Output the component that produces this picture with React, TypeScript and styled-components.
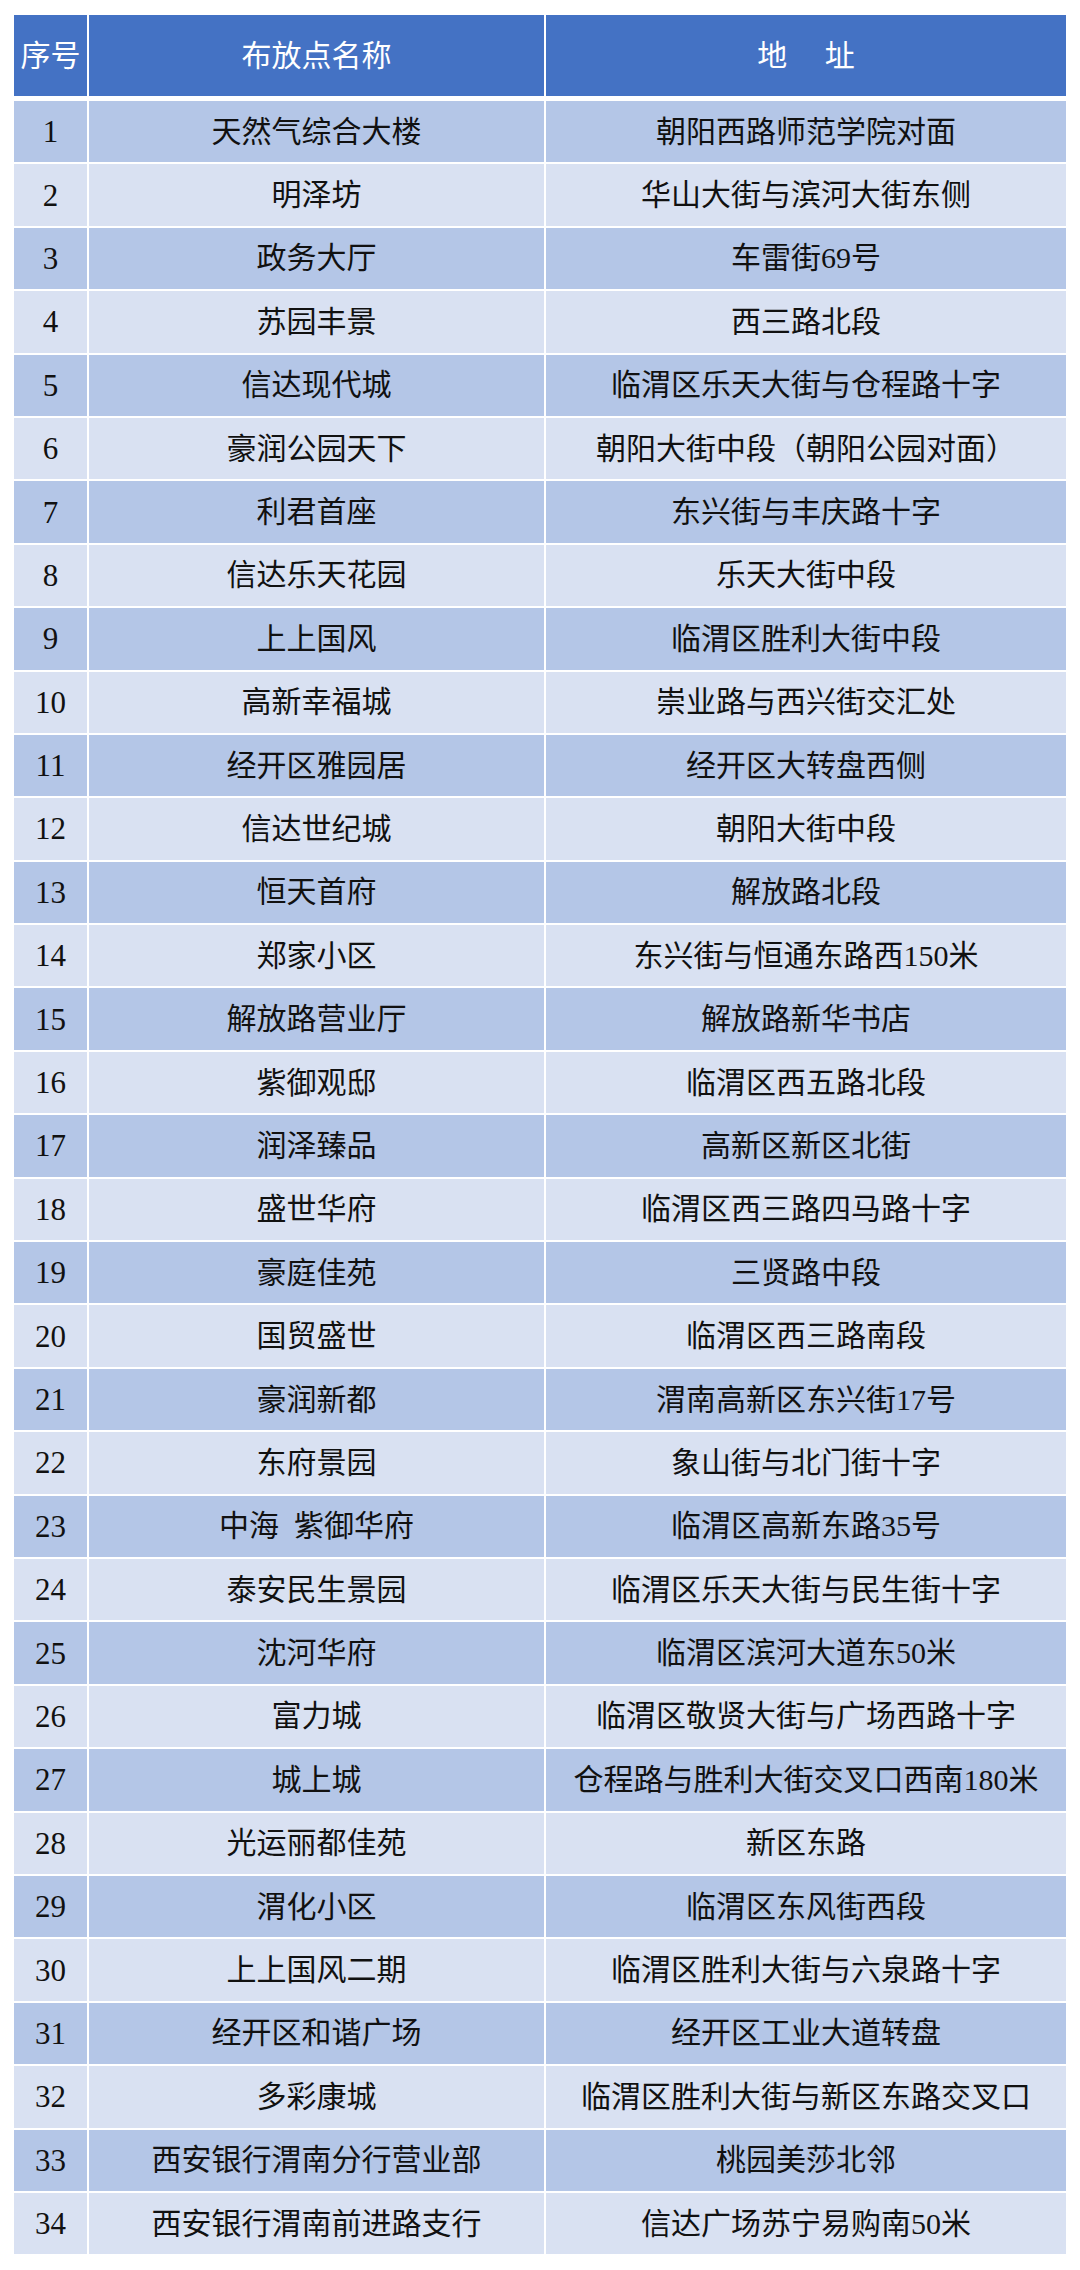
import styled, { createGlobalStyle } from "styled-components";

const GlobalStyle = createGlobalStyle`
  html, body {
    margin: 0;
    padding: 0;
    background: #ffffff;
  }
  body {
    font-family: "Liberation Serif", "Noto Sans CJK SC", serif;
  }
`;

const sites: [string, string][] = [
  ["天然气综合大楼", "朝阳西路师范学院对面"],
  ["明泽坊", "华山大街与滨河大街东侧"],
  ["政务大厅", "车雷街69号"],
  ["苏园丰景", "西三路北段"],
  ["信达现代城", "临渭区乐天大街与仓程路十字"],
  ["豪润公园天下", "朝阳大街中段（朝阳公园对面）"],
  ["利君首座", "东兴街与丰庆路十字"],
  ["信达乐天花园", "乐天大街中段"],
  ["上上国风", "临渭区胜利大街中段"],
  ["高新幸福城", "崇业路与西兴街交汇处"],
  ["经开区雅园居", "经开区大转盘西侧"],
  ["信达世纪城", "朝阳大街中段"],
  ["恒天首府", "解放路北段"],
  ["郑家小区", "东兴街与恒通东路西150米"],
  ["解放路营业厅", "解放路新华书店"],
  ["紫御观邸", "临渭区西五路北段"],
  ["润泽臻品", "高新区新区北街"],
  ["盛世华府", "临渭区西三路四马路十字"],
  ["豪庭佳苑", "三贤路中段"],
  ["国贸盛世", "临渭区西三路南段"],
  ["豪润新都", "渭南高新区东兴街17号"],
  ["东府景园", "象山街与北门街十字"],
  ["中海\u2002紫御华府", "临渭区高新东路35号"],
  ["泰安民生景园", "临渭区乐天大街与民生街十字"],
  ["沈河华府", "临渭区滨河大道东50米"],
  ["富力城", "临渭区敬贤大街与广场西路十字"],
  ["城上城", "仓程路与胜利大街交叉口西南180米"],
  ["光运丽都佳苑", "新区东路"],
  ["渭化小区", "临渭区东风街西段"],
  ["上上国风二期", "临渭区胜利大街与六泉路十字"],
  ["经开区和谐广场", "经开区工业大道转盘"],
  ["多彩康城", "临渭区胜利大街与新区东路交叉口"],
  ["西安银行渭南分行营业部", "桃园美莎北邻"],
  ["西安银行渭南前进路支行", "信达广场苏宁易购南50米"],
];

const Page = styled.div`
  padding: 15px 14px 15px 14px;
`;

const Table = styled.div`
  width: 1052px;
  display: flex;
  flex-direction: column;
  gap: 2px;
`;

const Row = styled.div<{ $head?: boolean }>`
  display: grid;
  grid-template-columns: 73px 455px 520px;
  column-gap: 2px;
  height: ${(p) => (p.$head ? "81px" : "61.4px")};
  margin-bottom: ${(p) => (p.$head ? "3px" : "0")};
`;

const Cell = styled.div<{ $tone: "head" | "odd" | "even" }>`
  display: flex;
  align-items: center;
  justify-content: center;
  white-space: pre;
  font-size: 30px;
  line-height: 1;
  color: ${(p) => (p.$tone === "head" ? "#ffffff" : "#111111")};
  background: ${(p) =>
    p.$tone === "head" ? "#4472c4" : p.$tone === "odd" ? "#b4c6e7" : "#d9e1f2"};
`;

const NumCell = styled(Cell)`
  font-size: 31px;
`;

export default function App() {
  return (
    <>
      <GlobalStyle />
      <Page>
        <Table>
          <Row $head>
            <Cell $tone="head">序号</Cell>
            <Cell $tone="head">布放点名称</Cell>
            <Cell $tone="head">地　 址</Cell>
          </Row>
          {sites.map(([name, addr], i) => {
            const tone = i % 2 === 0 ? "odd" : "even";
            return (
              <Row key={i}>
                <NumCell $tone={tone}>{i + 1}</NumCell>
                <Cell $tone={tone}>{name}</Cell>
                <Cell $tone={tone}>{addr}</Cell>
              </Row>
            );
          })}
        </Table>
      </Page>
    </>
  );
}
